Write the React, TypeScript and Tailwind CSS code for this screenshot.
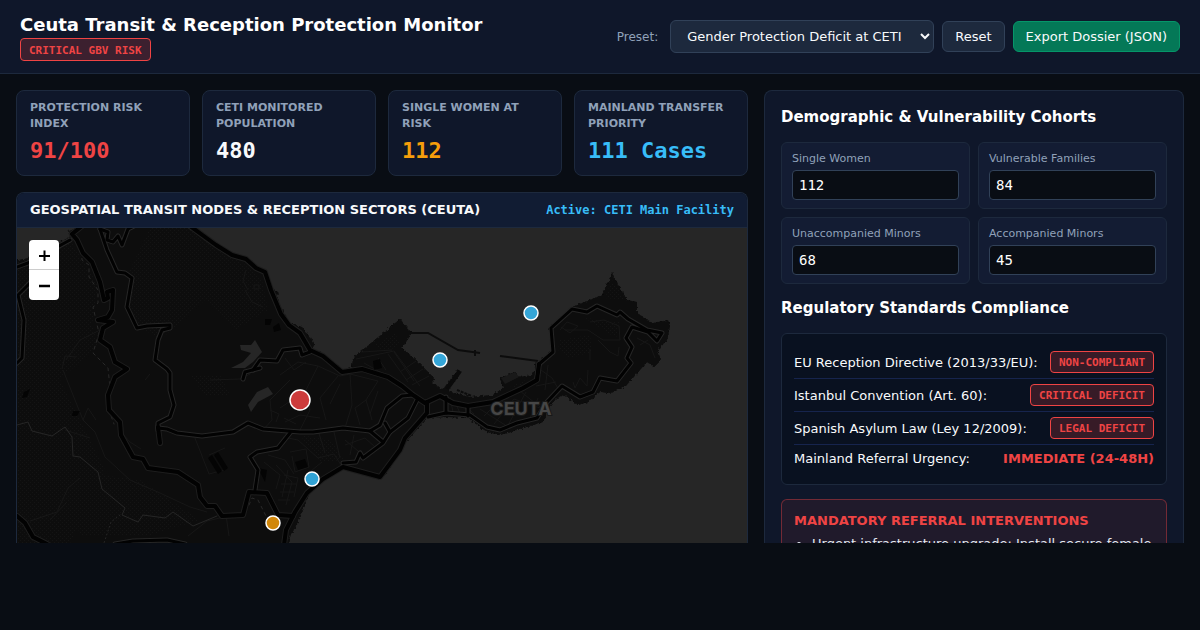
import { useState } from "react";

type Tone = "red" | "white" | "amber" | "sky";

const toneClass: Record<Tone, string> = {
  red: "text-[#ef4444]",
  white: "text-slate-50",
  amber: "text-[#f59e0b]",
  sky: "text-[#38bdf8]",
};
const metrics: { label: string; value: string; tone: Tone }[] = [
  { label: "Protection Risk Index", value: "91/100", tone: "red" },
  { label: "CETI Monitored Population", value: "480", tone: "white" },
  { label: "Single Women at Risk", value: "112", tone: "amber" },
  { label: "Mainland Transfer Priority", value: "111 Cases", tone: "sky" },
];

const initialCohorts = [
  { id: "single-women", label: "Single Women", value: "112" },
  { id: "families", label: "Vulnerable Families", value: "84" },
  { id: "unaccompanied", label: "Unaccompanied Minors", value: "68" },
  { id: "accompanied", label: "Accompanied Minors", value: "45" },
];

const standards = [
  { label: "EU Reception Directive (2013/33/EU):", status: "NON-COMPLIANT" },
  { label: "Istanbul Convention (Art. 60):", status: "CRITICAL DEFICIT" },
  { label: "Spanish Asylum Law (Ley 12/2009):", status: "LEGAL DEFICIT" },
];

const landPath =
  "M5 262L25 259 43 248 60 242 70 237 68 231 75 229 80 220H186L193 227 217 244 233 254 247 258 257 267 267 271 273 290 277 292 279 303 288 323 302 327 315 344 311 350 322 353 342 370 352 368 353 358 400 319 412 333 402 348 413 357 435 379 432 383 443 389 458 370 462 372 448 389 453 393 470 397 493 395 503 388 500 378 515 372 520 377 533 375 536 363 553 350 549 328 572 307 602 295 612 273 627 300 637 302 637 313 653 323 668 320 670 327 667 340 658 350 661 360 654 367 647 362 625 387 610 393 600 392 588 402 578 405 567 397 562 395 552 403 543 422 517 430 500 435 487 432 468 418 447 417 427 418 405 443 385 475 380 479 367 475 343 468 327 477 310 492 300 518 290 537 288 555H5Z";

const majorRoads = [
  "M82 226L72 234 77 240 83 253 92 262 100 282 104 300 108 298 107 292 113 290 112 310 108 317 98 320 113 322 103 328 100 340 110 347 115 362 127 369 115 377 108 395 109 410 120 422 121 435 133 457 143 459 148 468 178 472 198 485 200 497 207 506 215 506 222 516 243 515 249 492 267 493 278 515 293 516",
  "M190 226L216 245 232 255 246 259 256 268 265 272 271 290 281 314 289 325 300 333 310 350 323 356 342 372 362 369 388 377 402 386 413 395 425 403 440 396 453 403 468 406 493 402 523 388 537 380 539 364",
  "M427 402L427 413 405 438 400 450 380 477 343 467 323 479 307 493 295 512 286 530 284 545",
  "M160 443L158 427",
  "M5 512L17 516 25 523 33 537 47 544",
];

const minorRoads = [
  "M100 229L107 250 117 272 125 273 132 278 127 307 137 328 147 326 170 325 170 328 162 330 158 340 155 360 167 369 170 373 170 390 174 405 170 417 158 423 158 430",
  "M158 428L167 429 177 433 202 436 233 432 248 423 263 429 300 432 313 432 343 428 370 431 380 425 387 408 402 396 413 395",
  "M537 378L539 364 553 352 551 328 572 309 587 312 597 306 617 315 620 312 628 319 647 330 662 333 657 341 648 332 632 327 626 338 632 347 627 358 631 363 617 381 600 378 593 392 580 397 562 386 547 402 537 418 517 423 500 430 487 427 470 415 446 413 428 417",
  "M417 400L408 418 390 432 383 443 363 458 360 453 356 462 343 463",
  "M385 423L390 432M370 431L383 442M446 397V413M468 406V416",
  "M290 433L278 448 257 452 250 457 258 470 255 490",
  "M17 267L28 263 70 240",
  "M30 283L18 295 24 320 22 358 17 363",
  "M100 229L108 232 107 240 113 242 118 236 122 245 128 229 134 226",
  "M253 370L260 360 277 361 283 350 300 348 302 355 310 352",
  "M243 379L245 372 260 368M115 544L133 541 167 540 185 544",
];

const tracks = [
  "M17 425L28 422 32 431 52 436 65 427 72 437 73 456 80 457 98 472 102 489 125 508 122 515 138 522 143 515 165 518 173 512 193 526 217 516",
];

const lanes = [
  "M63 370L83 420 95 432 105 457 130 480 160 493 190 507 207 512M83 420L88 408 96 420M30 521L57 512 68 488 80 478M65 430L90 438",
  "M195 438L209 474 224 470M210 380L240 379 250 374M66 360L80 340 100 330M62 369L65 356 76 357M145 380L150 374M121 432L130 442 141 449M290 380L270 400 272 420 263 430",
  "M248 290L243 281 246 270M263 307L252 302 245 290M254 285h5v4h-5z",
  "M280 375L298 362 318 366 306 390 310 410 300 430M318 366L340 376 350 374 352 405 345 428M350 374L378 381 366 400 372 420M366 400L355 408 360 425M378 391L370 414M338 376L320 398 326 420M285 358L294 370 306 362M395 400L385 415M340 384L330 404M285 422L300 415 320 418",
  "M356 359L394 351 420 386M364 363L398 382M388 354L408 382M394 352L414 381M400 372L416 361M406 380L423 369M412 385L429 376M378 358L386 370M362 352L392 350",
  "M484 416L500 400 522 413M494 424L514 399 540 408M507 427L526 392M480 409L505 425M520 391L545 411M536 386L556 382M541 370L552 378 560 392M548 365L545 390M530 418L538 398M454 400L460 413M450 397L453 412M460 401L474 414",
  "M560 330L567 322 578 326 570 333 561 327M565 330L588 330 603 340 620 340 619 326 604 320 590 322M598 340L610 352 618 356 619 347M573 382L575 388 580 378 587 386 588 370M590 349V360M637 338L650 345 655 358M640 345L648 340",
  "M283 437L298 440 318 458 334 454 341 465M290 452L306 449 309 467 295 472 292 456M318 430L325 453M334 432L340 458M345 445L365 438 375 447M268 455L285 460 294 474M264 462L280 475 276 489M276 465L292 482 286 505M284 475L298 478 294 497M281 484H296M280 492H294M288 470L282 497M278 500H290M306 475L322 462M345 440L358 451M354 435L350 455",
  "M188 536L207 521 232 515M226 515L229 536M50 520L67 502M209 455L225 448M270 410L279 414 276 422M280 408L292 400M284 418L296 424",
];

const nodes = [
  { name: "CETI Main Facility", x: 300, y: 400, r: 10, fill: "#ef4444" },
  { name: "Port", x: 440, y: 360, r: 7, fill: "#38bdf8" },
  { name: "Coast watch", x: 531, y: 313, r: 7, fill: "#38bdf8" },
  { name: "South sector", x: 312, y: 479, r: 7, fill: "#38bdf8" },
  { name: "Border crossing", x: 273, y: 523, r: 7, fill: "#f59e0b" },
];

function StatusBadge({ children }: { children: string }) {
  return (
    <span className="rounded border border-[#ef4444] bg-[#ef4444]/20 px-2 pt-0.5 font-['DejaVu_Sans_Mono',monospace] text-[11px] leading-[18px] font-bold whitespace-nowrap text-[#ef4444]">
      {children}
    </span>
  );
}

function CeutaMap() {
  return (
    <svg
      className="block h-full w-full"
      viewBox="17 228 730 315"
      preserveAspectRatio="xMinYMin slice"
      role="img"
      aria-label="Map of Ceuta"
    >
      <defs>
        <pattern id="dots" width="4" height="4" patternUnits="userSpaceOnUse">
          <path d="M0 0h1v1H0zM2 2h1v1H2z" fill="#141414" />
        </pattern>
        <filter id="coast" x="0" y="0" width="100%" height="100%">
          <feTurbulence type="fractalNoise" baseFrequency="0.35" numOctaves="2" seed="4" />
          <feDisplacementMap in="SourceGraphic" scale="4" xChannelSelector="R" yChannelSelector="G" />
        </filter>
        <clipPath id="land">
          <path d={landPath} />
        </clipPath>
      </defs>
      <rect x="17" y="227" width="730" height="320" fill="#262626" />
      <path d={landPath} fill="#090909" filter="url(#coast)" />
      <g clipPath="url(#land)">
        <path
          fill="url(#dots)"
          d="M17 262L70 240 98 285 92 325 98 345 60 380 105 470 70 543H17ZM130 270L150 228H190L235 256 262 280 268 310 235 330 205 300 160 340 130 320ZM375 345L395 333 400 345 385 352ZM560 340L590 335 592 352 570 358 558 350ZM585 318L620 322 616 338ZM605 298L612 280 625 300ZM508 388L530 378 520 386ZM300 435L330 440 345 460 320 462ZM190 375H220L230 395H205ZM60 470L140 480 200 520 150 535H80Z"
        />
        <g fill="none" stroke="#171717" strokeWidth="1">
          {lanes.map((d) => (
            <path key={d} d={d} />
          ))}
        </g>
        <path
          fill="#040404"
          d="M373 361l7-2 2 9-8 2zM295 462l10-3 3 8-10 3zM265 319h7l-2 6h-5zM273 327l6-4 2 7-7 2zM208 458l4-3 10 16-4 3zM214 455l4-3 10 16-4 3zM24 392l6-3-3 8-5 1zM73 411h7l-3 5h-5zM258 468l9 2-2 12z"
        />
      </g>
      <path
        fill="#262626"
        d="M240 345L251 345 255 340 262 352 253 362 245 368 231 368 243 362 251 353 241 350ZM248 405L257 392 268 387 273 394 258 402 251 412Z"
      />
      <path
        fill="none"
        stroke="#0c0c0c"
        strokeWidth="2"
        d="M410 333H428L458 350 480 353M500 356L538 361M475 350V356"
      />
      <path d="M457 390L472 396" fill="none" stroke="#0c0c0c" strokeWidth="2" strokeDasharray="3 1" />
      <path d="M447 389L460 371" fill="none" stroke="#0a0a0a" strokeWidth="4" />
      <path d="M501 378l14-6 4 5-14 7z" fill="#191919" />
      <g fill="none" strokeLinejoin="round" strokeLinecap="round">
        {tracks.map((d) => (
          <path key={d} d={d} stroke="#262626" />
        ))}
        <path
          d="M78 238L81 245 82 260 89 265 89 277 98 290 98 303 93 307 99 333 93 353 108 368 110 388 109 410 114 424M249 505L252 498 258 500 267 518"
          stroke="#292929"
          strokeDasharray="3 4"
        />
        <path d="M120 515L111 522 104 543" stroke="#262626" strokeDasharray="1 3" />
        {majorRoads.map((d) => (
          <path key={d} d={d} stroke="#1e1e1e" strokeWidth="6" />
        ))}
        {minorRoads.map((d) => (
          <path key={d} d={d} stroke="#262626" strokeWidth="5" />
        ))}
        {majorRoads.map((d) => (
          <path key={d} d={d} stroke="#020202" strokeWidth="4" />
        ))}
        {minorRoads.map((d) => (
          <path key={d} d={d} stroke="#020202" strokeWidth="3" />
        ))}
      </g>
      <text
        x="521"
        y="415"
        textAnchor="middle"
        className="fill-[#464646] stroke-[#191919] font-['Inter',sans-serif] text-[18px] font-bold"
        strokeWidth="2"
        paintOrder="stroke"
      >
        CEUTA
      </text>
      {nodes.map((n) => (
        <circle key={n.name} cx={n.x} cy={n.y} r={n.r} fill={n.fill} fillOpacity="0.85" stroke="#fff" strokeWidth="1.5" />
      ))}
    </svg>
  );
}

export default function App() {
  const [cohorts, setCohorts] = useState(initialCohorts);

  return (
    <div className="flex h-screen flex-col overflow-hidden bg-[#090d14] pb-[87px] font-['DejaVu_Sans',sans-serif] text-slate-50">
      <header className="flex items-center justify-between border-b border-slate-800 bg-[#0f172a] px-5 py-3">
        <div className="flex flex-col items-start gap-px">
          <h1 className="text-[18px] leading-[25px] font-bold text-white">
            Ceuta Transit &amp; Reception Protection Monitor
          </h1>
          <span className="rounded border border-[#ef4444] bg-[#ef4444]/20 px-2 pt-0.5 font-['DejaVu_Sans_Mono',monospace] text-[11px] leading-[19px] font-bold text-[#ef4444]">
            CRITICAL GBV RISK
          </span>
        </div>
        <div className="flex items-center gap-2">
          <label htmlFor="preset" className="mr-1 text-[12px] text-slate-400">
            Preset:
          </label>
          <select
            id="preset"
            className="w-[264px] rounded-md border border-slate-700 bg-slate-800 py-[7px] pr-0 pl-3 text-[13px] leading-[15px] text-slate-50"
          >
            <option>Gender Protection Deficit at CETI</option>
          </select>
          <button
            type="button"
            onClick={() => setCohorts(initialCohorts)}
            className="rounded-md border border-slate-700 bg-slate-800 px-3 py-[7px] text-[13px] leading-[15px]"
          >
            Reset
          </button>
          <button
            type="button"
            className="rounded-md border border-[#059669] bg-[#047857] px-3 py-[7px] text-[13px] leading-[15px]"
          >
            Export Dossier (JSON)
          </button>
        </div>
      </header>

      <main className="grid min-h-0 flex-1 grid-cols-[minmax(0,1fr)_420px] grid-rows-[minmax(0,1fr)] gap-4 overflow-hidden px-4 pt-4">
        <div className="flex min-h-0 flex-col gap-4">
          <section className="grid grid-cols-4 gap-3">
            {metrics.map((m) => (
              <div key={m.label} className="rounded-lg border border-slate-800 bg-[#0f172a] px-[13px] pt-[9px] pb-[10px]">
                <div className="text-[11px] leading-4 font-bold text-slate-400 uppercase">{m.label}</div>
                <div
                  className={`mt-[5px] font-['DejaVu_Sans_Mono',monospace] text-[22px] leading-7 font-bold ${toneClass[m.tone]}`}
                >
                  {m.value}
                </div>
              </div>
            ))}
          </section>

          <section className="flex min-h-0 flex-1 flex-col overflow-hidden rounded-t-lg border border-b-0 border-slate-800">
            <div className="flex items-center justify-between border-b border-slate-800 bg-[#111c33] px-[13px] py-2">
              <h2 className="text-[13px] leading-[18px] font-bold">GEOSPATIAL TRANSIT NODES &amp; RECEPTION SECTORS (CEUTA)</h2>
              <span className="font-['DejaVu_Sans_Mono',monospace] text-[12px] leading-[18px] font-bold text-[#38bdf8]">
                Active: CETI Main Facility
              </span>
            </div>
            <div className="relative min-h-0 flex-1">
              <CeutaMap />
              <div className="absolute top-3 left-3 flex flex-col overflow-hidden rounded-sm bg-white text-black">
                <button
                  type="button"
                  aria-label="Zoom in"
                  className="flex h-[30px] w-[30px] items-center justify-center border-b border-[#ccc]"
                >
                  <svg className="h-3 w-3" viewBox="0 0 12 12" stroke="currentColor" strokeWidth="2">
                    <path d="M1 7h11M6.5 1.5v11" />
                  </svg>
                </button>
                <button type="button" aria-label="Zoom out" className="flex h-[30px] w-[30px] items-center justify-center">
                  <svg className="h-3 w-3" viewBox="0 0 12 12" stroke="currentColor" strokeWidth="2.5">
                    <path d="M1 7h11" />
                  </svg>
                </button>
              </div>
            </div>
          </section>
        </div>

        <aside className="min-h-0 overflow-hidden rounded-t-lg border border-b-0 border-slate-800 bg-[#0f172a] px-4 pt-[17px]">
          <h2 className="mb-[15px] text-[15px] leading-[19px] font-bold text-white">Demographic &amp; Vulnerability Cohorts</h2>
          <div className="mb-[15px] grid grid-cols-2 gap-2">
            {cohorts.map((c, i) => (
              <div key={c.id} className="rounded-md border border-slate-800 bg-[#131c33] px-[10px] pt-[9px] pb-2">
                <label htmlFor={c.id} className="mb-1 block text-[11px] leading-[14px] text-slate-400">
                  {c.label}
                </label>
                <input
                  id={c.id}
                  type="text"
                  inputMode="numeric"
                  value={c.value}
                  onChange={(e) => setCohorts(cohorts.map((o, j) => (j === i ? { ...o, value: e.target.value } : o)))}
                  className="block w-full rounded border border-slate-700 bg-[#090d14] px-1.5 py-1.5 font-['DejaVu_Sans_Mono',monospace] text-[14px] leading-4 text-white"
                />
              </div>
            ))}
          </div>

          <h2 className="mb-[15px] text-[15px] leading-[19px] font-bold text-white">Regulatory Standards Compliance</h2>
          <div className="mb-[14px] rounded-md border border-slate-800 bg-[#091120] p-3 text-[13px] leading-[17px]">
            {standards.map((s) => (
              <div key={s.label} className="flex items-center justify-between border-b border-[#16244d] py-[5px]">
                <span>{s.label}</span>
                <StatusBadge>{s.status}</StatusBadge>
              </div>
            ))}
            <div className="flex items-center justify-between py-[5px]">
              <span>Mainland Referral Urgency:</span>
              <strong className="text-[#ef4444]">IMMEDIATE (24-48H)</strong>
            </div>
          </div>

          <div className="rounded-md border border-[#ef4444]/40 bg-[#ef4444]/8 p-3">
            <h3 className="mb-1.5 text-[13px] leading-[17px] font-bold text-[#ef4444]">MANDATORY REFERRAL INTERVENTIONS</h3>
            <ul className="list-disc pl-[18px] text-[13px] leading-[18px] text-slate-200">
              <li>Urgent infrastructure upgrade: Install secure female</li>
            </ul>
          </div>
        </aside>
      </main>
    </div>
  );
}
